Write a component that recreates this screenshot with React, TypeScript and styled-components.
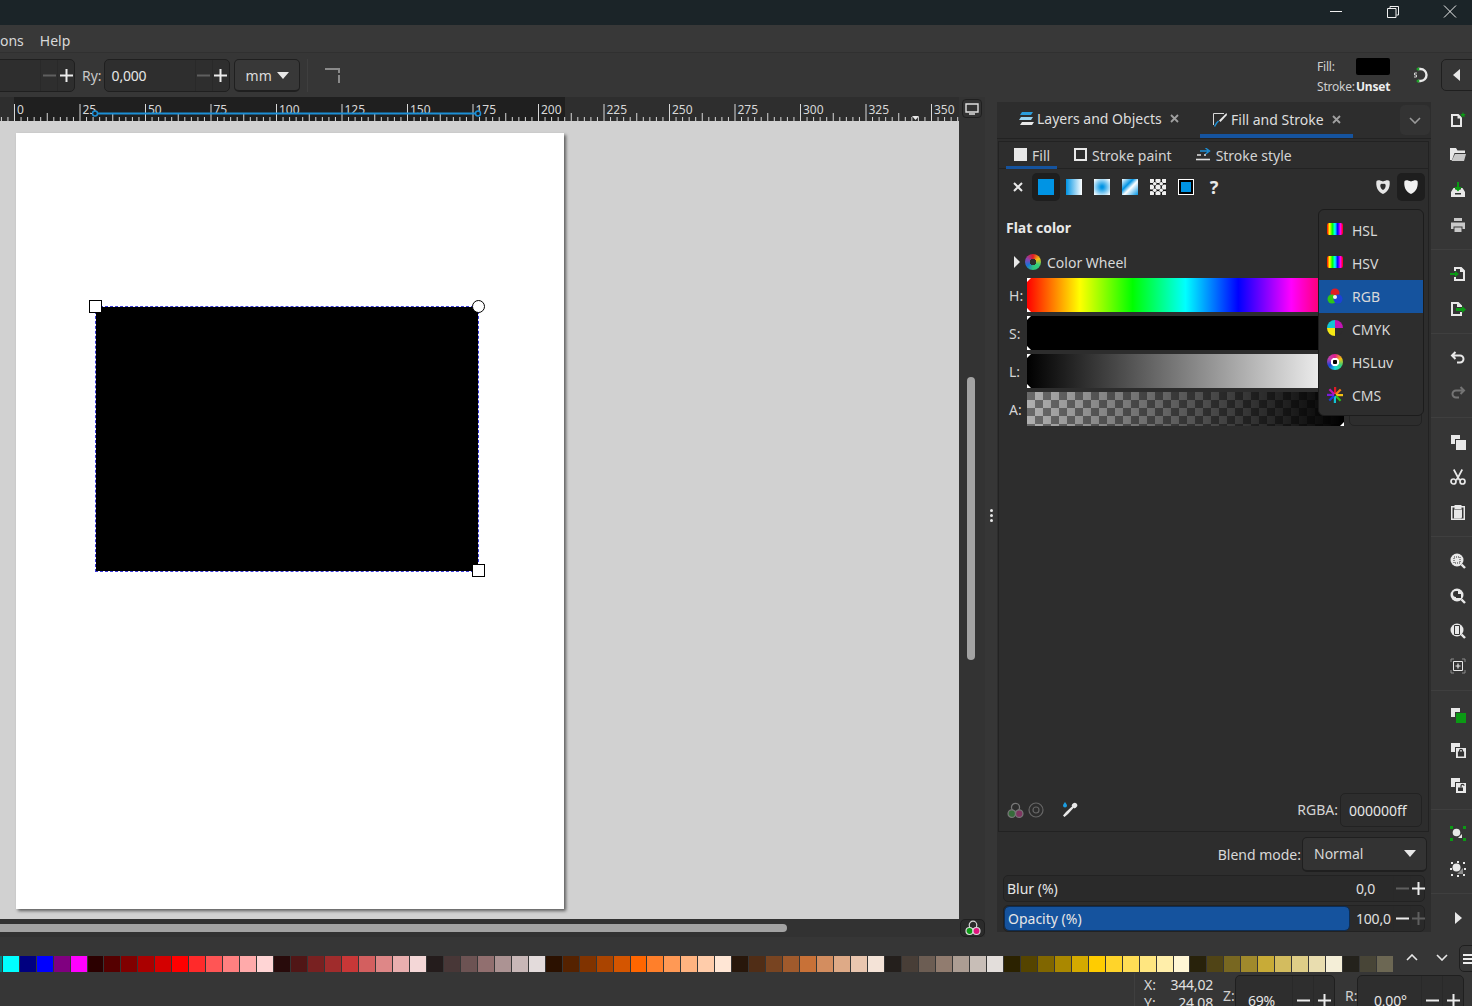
import React from 'react';
import styled, { createGlobalStyle } from 'styled-components';

const GlobalStyle = createGlobalStyle`
  html, body { margin: 0; padding: 0; background: #363636; }
  body { font-family: "Noto Sans", "Open Sans", sans-serif; font-size: 14px; color: #e4e4e4; }
  * { box-sizing: border-box; }
`;

const Window = styled.div`
  width: 1472px;
  height: 1006px;
  display: flex;
  flex-direction: column;
  overflow: hidden;
  background: #363636;
`;

const TitleBar = styled.div`
  height: 25px;
  background: #1b2428;
  display: flex;
  justify-content: flex-end;
  align-items: flex-start;
  padding: 2px 15px 0 0;
  gap: 43px;
  flex: none;
`;

const MenuBar = styled.div`
  height: 28px;
  flex: none;
  display: flex;
  align-items: center;
  gap: 16px;
  border-bottom: 1px solid #303030;
  background: #383838;
  padding-top: 3px;
  color: #d8d8d8;
`;

const ToolBar = styled.div`
  height: 44px;
  flex: none;
  display: flex;
  align-items: flex-start;
  padding-top: 6px;
  background: #363636;
  position: relative;
`;

const Label = styled.span`
  color: #c8c8c8;
  line-height: 33px;
`;

const SpinFrame = styled.div<{ $w: number; $h?: number; $cell?: number }>`
  width: ${p => p.$w}px;
  height: ${p => p.$h ?? 33}px;
  flex: none;
  display: grid;
  grid-template-columns: 1fr ${p => p.$cell ?? 17}px ${p => p.$cell ?? 17}px;
  background: #2e2e2e;
  border: 1px solid #1f1f1f;
  border-radius: 5px;
`;

const SpinValue = styled.div<{ $pad?: number; $size?: number }>`
  display: flex;
  align-items: center;
  padding-left: ${p => p.$pad ?? 7}px;
  color: #e6e6e6;
  font-size: ${p => p.$size ?? 14}px;
  letter-spacing: -0.2px;
`;

const SpinCell = styled.div<{ $dim?: boolean }>`
  display: flex;
  align-items: center;
  justify-content: center;
  border-left: 1px solid #292929;
  color: ${p => (p.$dim ? '#5f5f5f' : '#ececec')};
`;

const Glyph = styled.svg`
  display: block;
  flex: none;
`;

const MinusIcon = () => (
  <Glyph width="13" height="13" viewBox="0 0 13 13"><path d="M0 6.5h13" stroke="currentColor" strokeWidth="2" /></Glyph>
);
const PlusIcon = () => (
  <Glyph width="13" height="13" viewBox="0 0 13 13"><path d="M0 6.5h13M6.5 0v13" stroke="currentColor" strokeWidth="2" /></Glyph>
);
const Caret = () => (
  <Glyph width="12" height="7" viewBox="0 0 12 7"><path d="M0 0h12L6 7z" fill="#e8e8e8" /></Glyph>
);

const Spin: React.FC<{ w: number; h?: number; value?: string; minusDim?: boolean; plusDim?: boolean; pad?: number; cell?: number }> = ({ w, h, value, minusDim, plusDim, pad, cell }) => (
  <SpinFrame $w={w} $h={h} $cell={cell}>
    <SpinValue $pad={pad}>{value}</SpinValue>
    <SpinCell $dim={minusDim}><MinusIcon /></SpinCell>
    <SpinCell $dim={plusDim}><PlusIcon /></SpinCell>
  </SpinFrame>
);

const UnitSelect = styled.div`
  width: 66px;
  height: 33px;
  margin-left: 4px;
  flex: none;
  display: flex;
  align-items: center;
  gap: 5px;
  padding-left: 11px;
  background: #383838;
  border: 1px solid #1f1f1f;
  border-bottom-width: 2px;
  border-radius: 5px;
  color: #dcdcdc;
`;

const ToolSep = styled.div`
  width: 1px;
  height: 33px;
  margin: 0 17px 0 7px;
  background: #3f3f3f;
`;

const CornerIcon = () => (
  <Glyph width="16" height="16" viewBox="0 0 16 16" style={{ marginTop: 9 }}>
    <path d="M0 1h14v4M14 7v8" stroke="#8a8a8a" strokeWidth="2" strokeDasharray="none" fill="none" />
  </Glyph>
);

const StyleIndicator = styled.div`
  margin-left: auto;
  margin-right: 81px;
  width: 74px;
  font-size: 12px;
  letter-spacing: -0.2px;
  color: #cfcfcf;
  display: grid;
  grid-template-columns: 39px 35px;
  grid-template-rows: 18px 18px;
  row-gap: 2px;
  margin-top: -2px;
  align-items: center;
`;

const FillSwatch = styled.div`
  width: 34px;
  height: 17px;
  background: #000;
  border-radius: 2px;
`;

const StrokeValue = styled.b`
  font-weight: 700;
  color: #eee;
`;

const SnapButton = styled.div`
  position: absolute;
  right: 41px;
  top: 13px;
`;

const CollapseButton = styled.div`
  position: absolute;
  right: -5px;
  top: 6px;
  width: 36px;
  height: 32px;
  border: 1px solid #1f1f1f;
  border-radius: 5px;
  display: flex;
  align-items: center;
  padding-left: 11px;
`;

const Workspace = styled.div`
  height: 840px;
  flex: none;
  display: flex;
`;

const CanvasColumn = styled.div`
  width: 985px;
  flex: none;
  display: grid;
  grid-template-columns: 959px 26px;
  grid-template-rows: 24px 798px 18px;
`;

const RulerBox = styled.div`
  background: #2e2e2e;
  overflow: hidden;
`;

const MonitorCell = styled.div`
  background: #333;
  padding: 2px 3px;
`;

const MonitorBtn = styled.div`
  height: 19px;
  border: 1px solid #1f1f1f;
  border-radius: 4px;
  display: flex;
  justify-content: center;
  align-items: center;
`;

const Canvas = styled.div`
  position: relative;
  background: #d1d1d1;
  overflow: hidden;
`;

const Page = styled.div`
  position: absolute;
  left: 16px;
  top: 12px;
  width: 548px;
  height: 776px;
  background: #fff;
  box-shadow: 2px 2px 3px rgba(0, 0, 0, 0.55);
`;

const BlackRect = styled.div`
  position: absolute;
  left: 96px;
  top: 186px;
  width: 382px;
  height: 264px;
  background: #000;
  outline: 1px dashed #3a3ad8;
`;

const Handle = styled.div<{ $x: number; $y: number; $round?: boolean }>`
  position: absolute;
  left: ${p => p.$x - 7}px;
  top: ${p => p.$y - 7}px;
  width: 13px;
  height: 13px;
  background: #fff;
  border: 1px solid #000;
  border-radius: ${p => (p.$round ? '50%' : '0')};
`;

const VScrollTrack = styled.div`
  background: #333;
  position: relative;
`;

const VThumb = styled.div`
  position: absolute;
  left: 8px;
  top: 256px;
  width: 8px;
  height: 283px;
  border-radius: 4px;
  background: #a3a3a3;
`;

const HScrollTrack = styled.div`
  background: #323232;
  padding-top: 5px;
`;

const HThumb = styled.div`
  width: 787px;
  height: 8px;
  border-radius: 0 4px 4px 0;
  background: #a3a3a3;
`;

const DisplayCell = styled.div`
  background: #323232;
  display: flex;
  padding-left: 1px;
`;

const DisplayBtn = styled.div`
  width: 25px;
  height: 18px;
  background: #2b2b2b;
  border: 1px solid #1f1f1f;
  border-radius: 5px;
  display: flex;
  align-items: center;
  justify-content: center;
`;

const Grip = styled.div`
  width: 12px;
  flex: none;
  display: flex;
  flex-direction: column;
  justify-content: center;
  align-items: center;
  gap: 2px;
  padding-bottom: 4px;
  span {
    width: 3px;
    height: 3px;
    border-radius: 50%;
    background: #e6e6e6;
  }
`;

const Panel = styled.div`
  width: 434px;
  height: 830px;
  margin-top: 5px;
  flex: none;
  background: #2d2d2d;
  display: flex;
  flex-direction: column;
`;

const DockTabs = styled.div`
  height: 37px;
  flex: none;
  display: flex;
  position: relative;
  border-bottom: 1px solid #222;
`;

const DockTab = styled.div<{ $active?: boolean; $w: number; $pad: number }>`
  width: ${p => p.$w}px;
  height: 36px;
  display: flex;
  align-items: center;
  padding-left: ${p => p.$pad}px;
  gap: 3px;
  border-bottom: 4px solid ${p => (p.$active ? '#15539e' : 'transparent')};
  padding-top: ${p => (p.$active ? 3 : 0)}px;
  font-size: 14px;
  color: #dedede;
  white-space: nowrap;
`;

const CloseMark = styled.span`
  color: #a0a0a0;
  margin-left: 5px;
  display: flex;
`;

const ChevronBtn = styled.div`
  position: absolute;
  right: 1px;
  top: 3px;
  width: 30px;
  height: 30px;
  background: #333;
  border-radius: 5px;
  display: flex;
  align-items: center;
  justify-content: center;
`;

const Notebook = styled.div`
  flex: 1;
  margin: 2px 2px 0 1px;
  border: 1px solid #222;
  position: relative;
  display: flex;
  flex-direction: column;
`;

const SubTabs = styled.div`
  height: 27px;
  flex: none;
  display: flex;
  padding-left: 7px;
  border-bottom: 1px solid #222;
  gap: 16px;
`;

const SubTab = styled.div<{ $active?: boolean }>`
  height: 27px;
  padding: 0 7px 0 8px;
  display: flex;
  align-items: center;
  gap: 5px;
  color: #d4d4d4;
  border-bottom: 3px solid ${p => (p.$active ? '#15539e' : 'transparent')};
  padding-top: 3px;
`;

const FillBox = styled.span<{ $filled?: boolean }>`
  width: 13px;
  height: 13px;
  margin-top: -3px;
  border: 2px solid #e8e8e8;
  background: ${p => (p.$filled ? '#e8e8e8' : 'transparent')};
`;

const PaintRow = styled.div`
  height: 28px;
  margin-top: 4px;
  flex: none;
  display: flex;
  padding-left: 5px;
  padding-right: 3px;
`;

const PaintBtn = styled.div<{ $on?: boolean }>`
  width: 28px;
  height: 28px;
  display: flex;
  align-items: center;
  justify-content: center;
  border-radius: 5px;
  background: ${p => (p.$on ? '#1e1e1e' : 'transparent')};
  color: #e8e8e8;
`;

const paintBackgrounds: Record<string, string> = {
  flat: '#0094e4',
  linear: 'linear-gradient(to right, #0094e4, #ffffff)',
  radial: 'radial-gradient(circle, #0094e4 10%, #ffffff 95%)',
  mesh: 'linear-gradient(135deg, #ffffff 0%, #0094e4 35%, #ffffff 55%, #0094e4 100%)',
};

const PaintSwatch = styled.div<{ $kind: string }>`
  width: 16px;
  height: 16px;
  background: ${p => paintBackgrounds[p.$kind]};
`;

const SwatchFrame = styled.div`
  width: 16px;
  height: 16px;
  border: 1px solid #fff;
  padding: 2px;
  background: #000;
  & > div { width: 100%; height: 100%; background: #0094e4; }
`;

const RowSpacer = styled.div`
  flex: 1;
`;

const Unknown = styled.b`
  font-size: 18px;
  font-weight: 700;
`;

const FlatTitle = styled.div`
  margin: 17px 0 0 7px;
  height: 20px;
  line-height: 20px;
  font-weight: 700;
  color: #e8e8e8;
  flex: none;
`;

const WheelRow = styled.div`
  height: 22px;
  margin: 13px 0 0 15px;
  flex: none;
  display: flex;
  align-items: center;
  gap: 5px;
  color: #d8d8d8;
`;

const WheelIcon = styled.span`
  width: 16px;
  height: 16px;
  margin-right: 1px;
  border-radius: 50%;
  background: radial-gradient(circle, #2d2d2d 0 3px, transparent 3.5px),
    conic-gradient(#e01b24, #f5c211, #33d17a, #2ec27e, #1c71d8, #9141ac, #e01b24);
`;

const SliderGrid = styled.div`
  margin: 5px 0 0 10px;
  display: grid;
  grid-template-columns: 18px 317px 72px;
  column-gap: 0;
  row-gap: 4px;
  grid-auto-rows: 34px;
  align-items: center;
`;

const SliderLabel = styled.span`
  color: #d4d4d4;
`;

const sliderBackgrounds: Record<string, string> = {
  H: 'linear-gradient(to right, #f00 0%, #ff0 16.66%, #0f0 33.33%, #0ff 50%, #00f 66.66%, #f0f 83.33%, #f00 100%)',
  S: '#000',
  L: 'linear-gradient(to right, #000 0%, #808080 50%, #fff 100%)',
  A: 'linear-gradient(to right, rgba(0,0,0,0), #000), repeating-conic-gradient(#b0b0b0 0 25%, #6a6a6a 0 50%) 0 0 / 16px 16px',
};

const SliderTrack = styled.div<{ $ch: string }>`
  height: 34px;
  position: relative;
  background: ${p => sliderBackgrounds[p.$ch]};
`;

const Marker = styled.i<{ $pos: 'tl' | 'bl' | 'br' }>`
  position: absolute;
  width: 4px;
  height: 4px;
  background: #fff;
  ${p => (p.$pos === 'tl' ? 'left:0;top:0;clip-path:polygon(0 0,100% 0,0 100%);' : '')}
  ${p => (p.$pos === 'bl' ? 'left:0;bottom:0;clip-path:polygon(0 0,100% 100%,0 100%);' : '')}
  ${p => (p.$pos === 'br' ? 'right:0;bottom:0;clip-path:polygon(100% 0,100% 100%,0 100%);' : '')}
`;

const SliderSpin = styled.div`
  margin-left: 5px;
  height: 34px;
  width: 73px;
  border: 1px solid #222;
  border-radius: 5px;
`;

const ModeMenu = styled.div`
  position: absolute;
  left: 319px;
  top: 67px;
  width: 106px;
  height: 207px;
  background: #2d2d2d;
  border: 1px solid #1c1c1c;
  border-radius: 6px;
  padding-top: 4px;
  z-index: 2;
`;

const ModeItem = styled.div<{ $on?: boolean }>`
  height: 33px;
  display: flex;
  align-items: center;
  padding-left: 8px;
  gap: 9px;
  color: #d8d8d8;
  background: ${p => (p.$on ? '#15539e' : 'transparent')};
`;

const RainbowBar = styled.span`
  width: 16px;
  height: 12px;
  margin-top: -4px;
  border-radius: 2px;
  background: linear-gradient(to right, #f00, #ff0, #0f0, #0ff, #00f, #f0f, #f00);
`;

const LuvIcon = styled.span`
  width: 16px;
  height: 16px;
  margin-top: -2px;
  border-radius: 50%;
  background: radial-gradient(circle, #000 0 2px, #fff 2.5px 4px, transparent 4.5px),
    conic-gradient(#e01b8e, #f5c211, #33d17a, #1cd8d8, #1c41d8, #c141ac, #e01b8e);
`;

const PanelFooter = styled.div`
  margin-top: auto;
  height: 38px;
  flex: none;
  display: flex;
  align-items: flex-start;
  padding: 0 6px 0 8px;
`;

const FooterIcons = styled.div`
  display: flex;
  align-items: center;
  height: 34px;
  gap: 4px;
`;

const RgbaLabel = styled.span`
  margin-left: auto;
  line-height: 34px;
  margin-right: 2px;
  color: #d4d4d4;
`;

const RgbaInput = styled.div`
  width: 82px;
  height: 34px;
  display: flex;
  align-items: center;
  padding-left: 8px;
  border: 1px solid #222;
  border-radius: 5px;
  color: #e6e6e6;
`;

const BlendRow = styled.div`
  height: 35px;
  margin-top: 5px;
  flex: none;
  display: flex;
  justify-content: flex-end;
  align-items: center;
  padding-right: 4px;
  gap: 1px;
  color: #d8d8d8;
`;

const BlendSelect = styled.div`
  width: 125px;
  height: 35px;
  display: flex;
  align-items: center;
  justify-content: space-between;
  padding: 0 10px 2px 11px;
  background: #333;
  border: 1px solid #1f1f1f;
  border-bottom-width: 2px;
  border-radius: 5px;
`;

const ScaleRow = styled.div`
  height: 27px;
  margin: 3px 6px 0 6px;
  flex: none;
  display: grid;
  grid-template-columns: 345px 44px 17px 16px;
  background: #2a2a2a;
  border: 1px solid #222;
  border-radius: 5px;
`;

const ScaleBar = styled.div<{ $on?: boolean }>`
  display: flex;
  align-items: center;
  padding-left: 3px;
  color: #e6e6e6;
  border-radius: 4px;
  background: ${p => (p.$on ? '#15539e' : 'transparent')};
  outline: ${p => (p.$on ? '1px solid #0c2d55' : 'none')};
  margin: ${p => (p.$on ? '1px 0 1px 1px' : '0')};
`;

const ScaleValue = styled.div`
  display: flex;
  align-items: center;
  padding-left: 7px;
  color: #e0e0e0;
  font-size: 14px;
  letter-spacing: -0.2px;
  white-space: nowrap;
`;

const RightBar = styled.div`
  width: 41px;
  flex: none;
  padding-top: 5px;
  display: flex;
  flex-direction: column;
`;

const ToolBtn = styled.div`
  height: 35px;
  flex: none;
  display: flex;
  align-items: center;
  justify-content: center;
  padding-left: 12px;
`;

const ToolGap = styled.div`
  height: 14px;
  flex: none;
  display: flex;
  align-items: center;
  &::after {
    content: '';
    width: 100%;
    height: 1px;
    background: #3f3f3f;
  }
`;

const PaletteRow = styled.div`
  height: 36px;
  flex: none;
  display: flex;
  align-items: flex-start;
  position: relative;
  overflow: hidden;
`;

const Swatches = styled.div`
  margin-left: -14.3px;
  margin-top: 19px;
  display: flex;
`;

const Swatch = styled.div<{ $c: string }>`
  width: 16.98px;
  height: 16px;
  flex: none;
  background: ${p => p.$c};
  border-right: 1px solid #363636;
`;

const PaletteArrows = styled.div`
  position: absolute;
  right: 0;
  top: 8px;
  display: flex;
  align-items: flex-start;
`;

const ArrowBtn = styled.div`
  width: 30px;
  height: 24px;
  display: flex;
  align-items: center;
  justify-content: center;
`;

const PaletteMenu = styled.div`
  width: 20px;
  height: 27px;
  margin-right: -7px;
  margin-left: 2px;
  border: 1px solid #1f1f1f;
  border-radius: 5px;
  display: flex;
  flex-direction: column;
  justify-content: center;
  gap: 2px;
  padding-left: 3px;
  span { width: 10px; height: 2px; background: #eee; }
`;

const StatusBar = styled.div`
  height: 33px;
  flex: none;
  display: flex;
  align-items: flex-start;
  padding: 2px 0 0 1134px;
  overflow: hidden;
  color: #d8d8d8;
`;

const Coords = styled.div`
  width: 89px;
  height: 40px;
  border-left: 1px solid #3f3f3f;
  margin-top: -2px;
  padding-left: 9px;
  display: grid;
  grid-template-columns: 26px 43px;
  grid-auto-rows: 18px;
  font-size: 14px;
  line-height: 18px;
  padding-top: 3px;
  span:nth-child(even) { text-align: right; letter-spacing: -0.2px; color: #e0e0e0; }
`;

const StatusLabel = styled.span`
  line-height: 42px;
  width: 12px;
  color: #d0d0d0;
  margin-right: 0;
`;

const Ruler = () => {
  const ticks: React.ReactNode[] = [];
  for (let i = -2; i < 145; i++) {
    const x = 14.5 + i * 6.55;
    const h = i % 10 === 0 ? 17 : i % 5 === 0 ? 8 : 4;
    ticks.push(<line key={i} x1={x} x2={x} y1={24 - h} y2={24} stroke="#d8d8d8" strokeWidth="1" />);
  }
  const labels = [0, 25, 50, 75, 100, 125, 150, 175, 200, 225, 250, 275, 300, 325, 350];
  return (
    <svg width="959" height="24" style={{ display: 'block' }}>
      <rect x="14" width="551" height="24" fill="#1f1f1f" />
      {ticks}
      {labels.map((n, i) => (
        <text key={n} x={17 + i * 65.5} y="17" fontSize="12" fontFamily="Noto Sans" fill="#d8d8d8">{n}</text>
      ))}
      <line x1="95" x2="478" y1="16.5" y2="16.5" stroke="#1c8fd6" strokeWidth="2" />
      <circle cx="95" cy="16.5" r="2.5" fill="#1f1f1f" stroke="#1c8fd6" strokeWidth="1.5" />
      <circle cx="478" cy="16.5" r="2.5" fill="#1f1f1f" stroke="#1c8fd6" strokeWidth="1.5" />
      <path d="M912 19h7l-3.5 4z" fill="#e8e8e8" />
    </svg>
  );
};

const WinMin = () => <Glyph width="14" height="20" viewBox="0 0 14 20"><path d="M1 9.5h12" stroke="#f0f0f0" /></Glyph>;
const WinMax = () => (
  <Glyph width="14" height="20" viewBox="0 0 14 20"><path d="M1.5 6.5h8.5v9h-8.5zM4 6V4.5h8.5V13H10.500" stroke="#f0f0f0" fill="none" /></Glyph>
);
const WinClose = () => <Glyph width="14" height="20" viewBox="0 0 14 20"><path d="M1 3.500l12 12M13 3.500l-12 12" stroke="#f0f0f0" /></Glyph>;

const SmallX = () => (
  <Glyph width="9" height="9" viewBox="0 0 9 9"><path d="M1 1l7 7M8 1l-7 7" stroke="currentColor" strokeWidth="1.8" /></Glyph>
);

const Chevron: React.FC<{ up?: boolean; color?: string }> = ({ up, color }) => (
  <Glyph width="12" height="7" viewBox="0 0 12 7">
    <path d={up ? 'M1 6l5-5 5 5' : 'M1 1l5 5 5-5'} stroke={color ?? '#e8e8e8'} strokeWidth="1.6" fill="none" />
  </Glyph>
);

const LayersIcon = () => (
  <Glyph width="15" height="15" viewBox="0 0 15 15">
    <path d="M3 1h11l-2 3H1z" fill="#2a9ddc" />
    <path d="M2 6h12l-2 3H0z" fill="#9ad4f0" />
    <path d="M3 11h12l-2 3H1z" fill="#e8e8e8" />
  </Glyph>
);

const PenIcon = () => (
  <Glyph width="16" height="16" viewBox="0 0 16 16">
    <path d="M1.500 13V1.500H12" stroke="#d8d8d8" strokeWidth="1" fill="none" />
    <path d="M14.500 1L7 8.500l1.500 1.500L15 3z" fill="#e8e8e8" />
    <path d="M7 9.500L5.500 11 3 15l-1-1 2-3.500 2-2z" fill="#1c8fd6" />
  </Glyph>
);

const StrokeStyleIcon = () => (
  <Glyph width="15" height="13" viewBox="0 0 15 13" style={{ marginTop: -3 }}>
    <path d="M4 3h8M9.500 0l4 3-4 3" stroke="#1c8fd6" strokeWidth="1.4" fill="none" />
    <path d="M1 7h4M8 7h2" stroke="#e0e0e0" strokeWidth="1.4" />
    <path d="M0 11.500h14" stroke="#e0e0e0" strokeWidth="1.6" />
  </Glyph>
);

const EvenOddIcon = () => (
  <Glyph width="16" height="16" viewBox="0 0 16 16">
    <path fillRule="evenodd" d="M1.500 2C3 .5 5.500 1.500 8 2.500c2.500-1 5-2 6.500-.5 1 5-1 11-6.500 13C2.500 13 .500 7 1.500 2zM8 5C5.500 4 5 6 5.500 8c.5 1.500 1.500 2.500 2.500 3 1-.5 2-1.500 2.500-3 .5-2 0-4-2.500-3z" fill="#e6e6e6" />
  </Glyph>
);

const NonZeroIcon = () => (
  <Glyph width="16" height="16" viewBox="0 0 16 16">
    <path d="M1.500 2C3 .5 5.500 1.500 8 2.500c2.500-1 5-2 6.500-.5 1 5-1 11-6.500 13C2.500 13 .500 7 1.500 2z" fill="#f0f0f0" />
  </Glyph>
);

const PatternIcon = () => (
  <Glyph width="16" height="16" viewBox="0 0 16 16">
    <rect width="16" height="16" fill="#111" />
    {[0, 1, 2].flatMap(r => [0, 1, 2].map(c => <circle key={`${r}${c}`} cx={c * 6.5 + 1.500} cy={r * 6.5 + 1.500} r="2.600" fill="#f0f0f0" />))}
    <circle cx="4.700" cy="4.700" r="1.800" fill="#f0f0f0" />
    <circle cx="11.200" cy="4.700" r="1.800" fill="#f0f0f0" />
    <circle cx="4.700" cy="11.200" r="1.800" fill="#f0f0f0" />
    <circle cx="11.200" cy="11.200" r="1.800" fill="#f0f0f0" />
  </Glyph>
);

const RgbIcon = () => (
  <Glyph width="16" height="16" viewBox="0 0 16 16" style={{ marginTop: -2 }}>
    <circle cx="8" cy="5" r="4.500" fill="#e01b24" />
    <circle cx="5" cy="11" r="4.500" fill="#2ec517" />
    <circle cx="11" cy="11" r="4.500" fill="#1c41d8" />
    <circle cx="8" cy="9" r="2" fill="#f0f0f0" />
  </Glyph>
);

const CmykIcon = () => (
  <Glyph width="16" height="16" viewBox="0 0 16 16" style={{ marginTop: -4 }}>
    <path d="M8 8V0a8 8 0 0 1 8 8z" fill="#c214b4" />
    <path d="M8 8H0a8 8 0 0 1 8-8z" fill="#12c4d4" />
    <path d="M8 8v8a8 8 0 0 1-8-8z" fill="#f5e814" />
    <path d="M8 8h8a8 8 0 0 1-8 8z" fill="#2d2d2d" />
  </Glyph>
);

const CmsIcon = () => {
  const colors = ['#e01b24', '#f57c11', '#f5c211', '#2ec517', '#12c4d4', '#1c41d8', '#7a1cd8', '#c214b4'];
  return (
    <Glyph width="16" height="16" viewBox="0 0 16 16" style={{ marginTop: -2 }}>
      {colors.map((c, i) => (
        <rect key={c} x="7" y="0" width="2.200" height="7" fill={c} transform={`rotate(${i * 45} 8 8)`} />
      ))}
    </Glyph>
  );
};

const ManagedIcon: React.FC<{ size?: number; bright?: boolean }> = ({ size, bright }) => (
  <Glyph width={size ?? 16} height={size ?? 16} viewBox="0 0 16 16">
    <circle cx="8" cy="5" r="3.800" fill="none" stroke={bright ? '#d8d8d8' : '#777'} strokeWidth="1.200" />
    <circle cx="4.500" cy="11" r="3.500" fill={bright ? '#0d9a17' : '#356b3a'} stroke={bright ? '#d8d8d8' : '#777'} strokeWidth="1.200" />
    <circle cx="11.500" cy="11" r="3.500" fill={bright ? '#e0147e' : '#7d3560'} stroke={bright ? '#d8d8d8' : '#777'} strokeWidth="1.200" />
  </Glyph>
);

const TargetIcon = () => (
  <Glyph width="16" height="16" viewBox="0 0 16 16">
    <circle cx="8" cy="8" r="7" fill="none" stroke="#666" strokeWidth="1.200" />
    <circle cx="8" cy="8" r="3" fill="none" stroke="#666" strokeWidth="1.200" />
  </Glyph>
);

const PickerIcon = () => (
  <Glyph width="16" height="16" viewBox="0 0 16 16">
    <path d="M3 0c1 1.500 2 2.500 2 3.500a2 2 0 0 1-4 0C1 2.500 2 1.500 3 0z" fill="#1c9de0" />
    <path d="M11 2l3 3-1.500 1.500-.8-.8L6 12l-3.500 3L1 13.500 4 10l6.200-5.700-.7-.8z" fill="#e8e8e8" />
    <path d="M11 1.500a1.800 1.800 0 0 1 3.500 3.500l-1 1-3.500-3.500z" fill="#e8e8e8" />
  </Glyph>
);

const SnapIcon = () => (
  <Glyph width="20" height="18" viewBox="0 0 20 18">
    <path d="M7 3h2.500a6 6 0 0 1 0 12H7" stroke="#e8e8e8" strokeWidth="2.400" fill="none" />
    <circle cx="7" cy="3" r="1.500" fill="#1fa32a" />
    <circle cx="7" cy="15" r="1.500" fill="#1fa32a" />
    <path d="M6 7H3.500v2H5.500v2H3" stroke="#d0d0d0" strokeWidth="1" fill="none" />
  </Glyph>
);

const W = '#e8e8e8';
const G = '#0b9a14';
const Tool: React.FC<{ children: React.ReactNode; size?: number }> = ({ children, size }) => (
  <ToolBtn>
    <Glyph width={size ?? 16} height={size ?? 16} viewBox="0 0 16 16">{children}</Glyph>
  </ToolBtn>
);

const RightTools = () => (
  <RightBar>
    <Tool>
      <path fillRule="evenodd" d="M1 2h7.500L12 5.500V15H1zM3 4v9h7V6.500H7.500V4z" fill={W} />
      <path d="M13 0l.8 1.900 2 .1-1.500 1.400.5 2-1.800-1.100-1.800 1.100.5-2L10.200 2l2-.1z" fill={G} />
    </Tool>
    <Tool>
      <path d="M0 1h6l1.500 2.500H15V6H4.500L2 13H0z" fill={W} />
      <path d="M5 7h11l-2 7H1.500z" fill="#c8c8c8" />
    </Tool>
    <Tool>
      <path d="M1 10l2.500-4H5v1.500h6V6h1.500L15 10v5H1z" fill={W} />
      <path d="M5 11h6v1.500H5z" fill="#333" />
      <path d="M7 0h2v5h3L8 9.500 4 5h3z" fill={G} />
    </Tool>
    <Tool>
      <path d="M4 1h8v3H4zM1 5.500h14V12h-2.500V9.500h-9V12H1zM4.500 10.500h7V15h-7z" fill="#c8c8c8" />
    </Tool>
    <ToolGap />
    <Tool>
      <path fillRule="evenodd" d="M4 1h7.500L15 4.500V15H4v-4h2v2h7V6h-3V3H6v2H4z" fill={W} />
      <path d="M0 7h5V5l4 3-4 3V9H0z" fill={G} />
    </Tool>
    <Tool>
      <path fillRule="evenodd" d="M1 1h7.500L12 4.500V6h-2V6H7V3H3v10h7v-2h2v4H1z" fill={W} />
      <path d="M6 7h6V5l4 3.500L12 12v-2H6z" fill={G} />
    </Tool>
    <ToolGap />
    <Tool>
      <path d="M5.500 2L2 5.500 5.500 9M2.500 5.500H10a3.500 3.500 0 0 1 0 7H7" stroke={W} strokeWidth="2" fill="none" />
    </Tool>
    <Tool>
      <path d="M10.500 2L14 5.500 10.500 9M13.500 5.500H6a3.500 3.500 0 0 0 0 7h3" stroke="#747474" strokeWidth="2" fill="none" />
    </Tool>
    <ToolGap />
    <Tool>
      <path d="M1 1h9v4H5v5H1z" fill={W} />
      <path d="M6 6h10v10H6z" fill={W} />
    </Tool>
    <Tool>
      <path d="M4.500 0l3.500 6.500L11.500 0 13 1 9 8.500l1.500 2.300-1.500 1L8 10.200 7 11.800l-1.500-1L7 8.500 3 1z" fill={W} />
      <circle cx="3.500" cy="12.500" r="2.500" fill="none" stroke={W} strokeWidth="1.700" />
      <circle cx="12.500" cy="12.500" r="2.500" fill="none" stroke={W} strokeWidth="1.700" />
    </Tool>
    <Tool>
      <path fillRule="evenodd" d="M1 2h3.500V1h7v1H15v14H1zM2.500 3.500v11h11v-11h-2V5h-7V3.500z" fill={W} />
      <path d="M4 5.500h8v8l-1.500 1H4z" fill={W} />
    </Tool>
    <ToolGap />
    <Tool>
      <circle cx="7" cy="7" r="6.500" fill={W} />
      <path d="M4 4h6v6H4z" fill="none" stroke="#333" strokeWidth="1" strokeDasharray="1 1" />
      <path d="M11.500 11.500L15 15" stroke={W} strokeWidth="2.400" />
    </Tool>
    <Tool>
      <circle cx="7" cy="7" r="6.500" fill={W} />
      <path d="M3 6a3 3 0 0 1 3-3h2v3h3v4H6V9a3 3 0 0 1-3-3z" fill="#333" />
      <path d="M11.500 11.500L15 15" stroke={W} strokeWidth="2.400" />
    </Tool>
    <Tool>
      <circle cx="7" cy="7" r="6.500" fill={W} />
      <path d="M4.500 2.500h5v9h-5z" fill={W} stroke="#333" strokeWidth="1" />
      <path d="M11.500 11.500L15 15" stroke={W} strokeWidth="2.400" />
    </Tool>
    <Tool>
      <path d="M1 4V1h3M12 1h3v3M15 12v3h-3M4 15H1v-3" stroke="#8a8a8a" fill="none" />
      <path d="M3.500 3.500h9v9h-9z" stroke={W} fill="none" />
      <path d="M8 5.500v5M5.500 8h5" stroke={W} strokeWidth="1.200" />
    </Tool>
    <ToolGap />
    <Tool>
      <path d="M1 1h9v4H5v5H1z" fill={W} />
      <path d="M6 6h10v10H6z" fill={G} />
    </Tool>
    <Tool>
      <path d="M1 1h9v4H5v5H1z" fill={W} />
      <path fillRule="evenodd" d="M6 6h10v10H6zM8 10h6v4H8z" fill={W} />
      <path d="M8.500 10h5v4h-5zM9.500 10V8.800a1.500 1.500 0 0 1 3 0V10" fill="none" stroke="#333" strokeWidth="1.200" />
      <path d="M8.500 10.500h5V14h-5z" fill="#333" />
    </Tool>
    <Tool>
      <path d="M1 1h9v4H5v5H1z" fill={W} />
      <path d="M6 6h10v10H6z" fill={W} />
      <path d="M8 10.500h5V14H8z" fill="#333" />
      <path d="M11 10.500V8.800a1.500 1.500 0 0 1 3 0" fill="none" stroke="#333" strokeWidth="1.200" />
    </Tool>
    <ToolGap />
    <Tool>
      <path d="M0 0h3v3H0zM13 0h3v3h-3zM0 12h3v3H0zM13 12h3v3h-3z" fill={G} />
      <circle cx="6.500" cy="6.500" r="3.800" fill={W} />
      <path d="M8 12l4-4v4z" fill={W} />
    </Tool>
    <Tool>
      <path d="M1 1h2v2H1zM7 0h2v2H7zM13 1h2v2h-2zM0 7h2v2H0zM14 7h2v2h-2zM1 13h2v2H1zM7 14h2v2H7zM13 13h2v2h-2z" fill={W} />
      <path d="M7 13l6-6v6z" fill="#8a8a8a" />
      <circle cx="6.500" cy="6.500" r="4" fill={W} />
    </Tool>
    <ToolGap />
    <Tool>
      <path d="M5 2l7 6-7 6z" fill={W} />
    </Tool>
  </RightBar>
);

const paletteColors = [
  '#008080', '#00ffff', '#000080', '#0000ff', '#800080', '#ff00ff',
  '#2b0000', '#550000', '#800000', '#aa0000', '#d40000', '#ff0000', '#ff2a2a', '#ff5555', '#ff8080', '#ffaaaa', '#ffd5d5',
  '#280b0b', '#501616', '#782121', '#a02c2c', '#c83737', '#d35f5f', '#de8787', '#e9afaf', '#f4d7d7',
  '#241c1c', '#483737', '#6c5353', '#916f6f', '#ac9393', '#c8b7b7', '#e3dbdb',
  '#2b1100', '#552200', '#803300', '#aa4400', '#d45500', '#ff6600', '#ff7f2a', '#ff9955', '#ffb380', '#ffccaa', '#ffe6d5',
  '#28170b', '#502d16', '#784421', '#a05a2c', '#c87137', '#d38d5f', '#deaa87', '#e9c6af', '#f4e3d7',
  '#241f1c', '#483e37', '#6c5d53', '#917c6f', '#ac9d93', '#c8beb7', '#e3dedb',
  '#2b2200', '#554400', '#806600', '#aa8800', '#d4aa00', '#ffcc00', '#ffd42a', '#ffdd55', '#ffe680', '#ffeeaa', '#fff6d5',
  '#28220b', '#504416', '#786721', '#a0892c', '#c8ab37', '#d3bc5f', '#decd87', '#e9ddaf', '#f4eed7',
  '#24221c', '#484537', '#6c6753',
];

const sliders: { ch: string; markers: ('tl' | 'bl' | 'br')[] }[] = [
  { ch: 'H', markers: ['tl', 'bl'] },
  { ch: 'S', markers: ['tl', 'bl'] },
  { ch: 'L', markers: ['tl', 'bl'] },
  { ch: 'A', markers: ['br'] },
];

const App: React.FC = () => (
  <Window>
    <GlobalStyle />
    <TitleBar>
      <WinMin />
      <WinMax />
      <WinClose />
    </TitleBar>
    <MenuBar>
      <span>ons</span>
      <span>Help</span>
    </MenuBar>
    <ToolBar>
      <div style={{ marginLeft: -10 }}>
        <Spin w={85} value="" minusDim />
      </div>
      <Label style={{ margin: '0 2px 0 7px' }}>Ry:</Label>
      <Spin w={126} value="0,000" minusDim />
      <UnitSelect>mm <Caret /></UnitSelect>
      <ToolSep />
      <CornerIcon />
      <StyleIndicator>
        <span>Fill:</span>
        <FillSwatch />
        <span>Stroke:</span>
        <StrokeValue>Unset</StrokeValue>
      </StyleIndicator>
      <SnapButton><SnapIcon /></SnapButton>
      <CollapseButton>
        <Glyph width="7" height="12" viewBox="0 0 7 12"><path d="M7 0v12L0 6z" fill="#e8e8e8" /></Glyph>
      </CollapseButton>
    </ToolBar>
    <Workspace>
      <CanvasColumn>
        <RulerBox><Ruler /></RulerBox>
        <MonitorCell>
          <MonitorBtn>
            <Glyph width="14" height="12" viewBox="0 0 14 12"><path d="M1 1h12v8H1zM4 11h6" stroke="#e0e0e0" strokeWidth="1.400" fill="none" /></Glyph>
          </MonitorBtn>
        </MonitorCell>
        <Canvas>
          <Page />
          <BlackRect />
          <Handle $x={96} $y={186} />
          <Handle $x={479} $y={186} $round />
          <Handle $x={479} $y={450} />
        </Canvas>
        <VScrollTrack><VThumb /></VScrollTrack>
        <HScrollTrack><HThumb /></HScrollTrack>
        <DisplayCell>
          <DisplayBtn><ManagedIcon bright /></DisplayBtn>
        </DisplayCell>
      </CanvasColumn>
      <Grip><span /><span /><span /></Grip>
      <Panel>
        <DockTabs>
          <DockTab $w={203} $pad={22}>
            <LayersIcon /> Layers and Objects <CloseMark><SmallX /></CloseMark>
          </DockTab>
          <DockTab $active $w={153} $pad={12}>
            <PenIcon /> Fill and Stroke <CloseMark><SmallX /></CloseMark>
          </DockTab>
          <ChevronBtn><Chevron color="#9a9a9a" /></ChevronBtn>
        </DockTabs>
        <Notebook>
          <SubTabs>
            <SubTab $active><FillBox $filled /> Fill</SubTab>
            <SubTab style={{ marginLeft: -7 }}><FillBox /> Stroke paint</SubTab>
            <SubTab style={{ marginLeft: -7 }}><StrokeStyleIcon /> Stroke style</SubTab>
          </SubTabs>
          <PaintRow>
            <PaintBtn><Glyph width="10" height="10" viewBox="0 0 10 10"><path d="M1 1l8 8M9 1l-8 8" stroke="#e8e8e8" strokeWidth="2" /></Glyph></PaintBtn>
            <PaintBtn $on><PaintSwatch $kind="flat" /></PaintBtn>
            <PaintBtn><PaintSwatch $kind="linear" /></PaintBtn>
            <PaintBtn><PaintSwatch $kind="radial" /></PaintBtn>
            <PaintBtn><PaintSwatch $kind="mesh" /></PaintBtn>
            <PaintBtn><PatternIcon /></PaintBtn>
            <PaintBtn><SwatchFrame><div /></SwatchFrame></PaintBtn>
            <PaintBtn><Unknown>?</Unknown></PaintBtn>
            <RowSpacer />
            <PaintBtn><EvenOddIcon /></PaintBtn>
            <PaintBtn $on><NonZeroIcon /></PaintBtn>
          </PaintRow>
          <FlatTitle>Flat color</FlatTitle>
          <WheelRow>
            <Glyph width="6" height="12" viewBox="0 0 6 12"><path d="M0 0l6 6-6 6z" fill="#e8e8e8" /></Glyph>
            <WheelIcon />
            Color Wheel
          </WheelRow>
          <SliderGrid>
            {sliders.map(s => (
              <React.Fragment key={s.ch}>
                <SliderLabel>{s.ch}:</SliderLabel>
                <SliderTrack $ch={s.ch}>
                  {s.markers.map(m => <Marker key={m} $pos={m} />)}
                </SliderTrack>
                {s.ch === 'A' ? <SliderSpin /> : <div />}
              </React.Fragment>
            ))}
          </SliderGrid>
          <ModeMenu>
            <ModeItem><RainbowBar /> HSL</ModeItem>
            <ModeItem><RainbowBar /> HSV</ModeItem>
            <ModeItem $on><RgbIcon /> RGB</ModeItem>
            <ModeItem><CmykIcon /> CMYK</ModeItem>
            <ModeItem><LuvIcon /> HSLuv</ModeItem>
            <ModeItem><CmsIcon /> CMS</ModeItem>
          </ModeMenu>
          <PanelFooter>
            <FooterIcons>
              <ManagedIcon size={17} />
              <TargetIcon />
              <div style={{ width: 10 }} />
              <PickerIcon />
            </FooterIcons>
            <RgbaLabel>RGBA:</RgbaLabel>
            <RgbaInput>000000ff</RgbaInput>
          </PanelFooter>
        </Notebook>
        <BlendRow>
          Blend mode:
          <BlendSelect>Normal <Caret /></BlendSelect>
        </BlendRow>
        <ScaleRow>
          <ScaleBar>Blur (%)</ScaleBar>
          <ScaleValue>0,0</ScaleValue>
          <SpinCell $dim><MinusIcon /></SpinCell>
          <SpinCell><PlusIcon /></SpinCell>
        </ScaleRow>
        <ScaleRow>
          <ScaleBar $on>Opacity (%)</ScaleBar>
          <ScaleValue>100,0</ScaleValue>
          <SpinCell><MinusIcon /></SpinCell>
          <SpinCell $dim><PlusIcon /></SpinCell>
        </ScaleRow>
      </Panel>
      <RightTools />
    </Workspace>
    <PaletteRow>
      <Swatches>
        {paletteColors.map((c, i) => <Swatch key={i} $c={c} />)}
      </Swatches>
      <PaletteArrows>
        <ArrowBtn><Chevron up /></ArrowBtn>
        <ArrowBtn><Chevron /></ArrowBtn>
        <PaletteMenu><span /><span /><span /></PaletteMenu>
      </PaletteArrows>
    </PaletteRow>
    <StatusBar>
      <Coords>
        <span>X:</span><span>344,02</span>
        <span>Y:</span><span>24,08</span>
      </Coords>
      <StatusLabel>Z:</StatusLabel>
      <Spin w={100} h={50} value="69%" pad={12} cell={21} />
      <StatusLabel style={{ marginLeft: 10 }}>R:</StatusLabel>
      <Spin w={107} h={50} value="0,00°" pad={16} cell={21} />
    </StatusBar>
  </Window>
);

export default App;
